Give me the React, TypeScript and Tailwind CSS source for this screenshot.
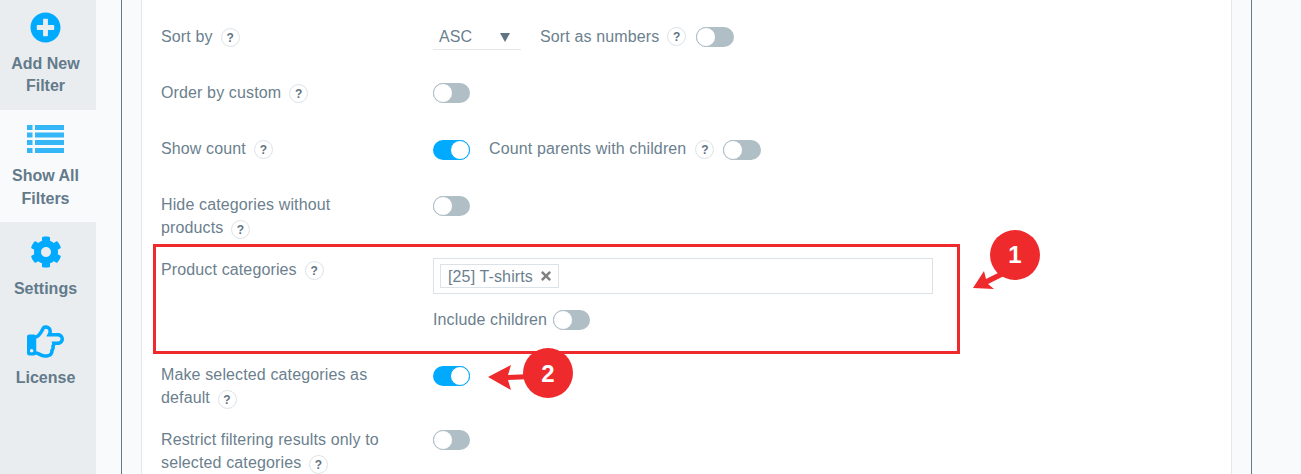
import type { ReactNode } from "react";
import { FaCog, FaPlusCircle, FaRegHandPointRight, FaTimes } from "react-icons/fa";

function Help({ className = "" }: { className?: string }) {
  return (
    <span
      className={`inline-flex h-[19px] w-[19px] shrink-0 items-center justify-center rounded-full border border-[#dbe3e8] bg-white text-[12px] font-bold leading-none text-[#5f7484] ${className}`}
    >
      ?
    </span>
  );
}

function Toggle({ on = false, wide = false, className = "" }: { on?: boolean; wide?: boolean; className?: string }) {
  return (
    <span
      className={`flex h-5 shrink-0 rounded-full ${wide ? "w-[38px]" : "w-[37px]"} ${on ? "justify-end bg-[#00aaff]" : "justify-start bg-[#b0bec5]"} ${className}`}
    >
      <span className={`h-5 w-5 rounded-full border bg-white ${on ? "border-[#00aaff]" : "border-[#b0bec5]"}`} />
    </span>
  );
}

function Row({ label, children }: { label: ReactNode; children?: ReactNode }) {
  return (
    <div className="flex min-h-[37px]">
      <div className="w-[272px] pr-12 text-[#6b7f8e]">{label}</div>
      <div className="flex-1 pt-0.5">{children}</div>
    </div>
  );
}

function ListIcon() {
  return (
    <svg width="37" height="28" viewBox="0 0 37 28" fill="#35b6f6">
      <rect x="0" y="0" width="5.5" height="5" />
      <rect x="8" y="0" width="29" height="5" />
      <rect x="0" y="7.5" width="5.5" height="5" />
      <rect x="8" y="7.5" width="29" height="5" />
      <rect x="0" y="15" width="5.5" height="5" />
      <rect x="8" y="15" width="29" height="5" />
      <rect x="0" y="23" width="5.5" height="5" />
      <rect x="8" y="23" width="29" height="5" />
    </svg>
  );
}

function NavItem({
  icon,
  lines,
  active = false,
  className = "",
  textClassName = "leading-[22.5px]",
}: {
  icon: ReactNode;
  lines: string[];
  active?: boolean;
  className?: string;
  textClassName?: string;
}) {
  return (
    <div className={`flex flex-col items-center pr-[5px] ${active ? "bg-[#f9fafc]" : ""} ${className}`}>
      <div className="flex h-8 items-center justify-center text-[#00aaff]">{icon}</div>
      <div className={`mt-2.5 text-center text-base font-bold text-[#637a8a] ${textClassName}`}>
        {lines.map((l) => (
          <div key={l}>{l}</div>
        ))}
      </div>
    </div>
  );
}

export default function App() {
  return (
    <div className="relative flex h-[474px] w-[1301px] overflow-hidden bg-[#f9fafc] font-['Liberation_Sans',Arial,sans-serif] text-base leading-[23px]">
      <aside className="w-24 shrink-0 bg-[#e9edf0]">
        <NavItem icon={<FaPlusCircle size={31} />} lines={["Add New", "Filter"]} className="h-[110px] pt-[11px]" textClassName="leading-[22px]" />
        <NavItem icon={<ListIcon />} lines={["Show All", "Filters"]} active className="h-[112px] pt-[13px]" />
        <NavItem icon={<FaCog size={32} />} lines={["Settings"]} className="h-[89px] pt-[14px]" />
        <NavItem icon={<FaRegHandPointRight size={37} />} lines={["License"]} className="pt-[14px]" />
      </aside>

      <div className="ml-[25px] h-full w-[1131px] shrink-0 border-x border-x-[#66798a] px-[19px]">
        <div className="h-full border-x border-x-[#e4e8ea] bg-white pl-[19px] pr-[18px] pt-[25px] tracking-[0.13px]">
          <div className="flex flex-col gap-[19px]">
            <Row
              label={
                <span className="flex items-center gap-2">
                  Sort by <Help className="mt-0.5" />
                </span>
              }
            >
              <div className="-mt-0.5 flex items-start">
                <div className="flex h-[25px] w-[88px] items-start justify-between border-b border-[#e4e8ea] pl-1.5 pr-[11px] text-[#6b7f8e]">
                  ASC
                  <span className="mt-2 h-0 w-0 border-x-[5px] border-t-[9px] border-x-transparent border-t-[#5f7484]" />
                </div>
                <span className="ml-[19px] text-[#6b7f8e]">Sort as numbers</span>
                <Help className="ml-2 mt-0.5" />
                <span className="ml-2.5 mt-0.5">
                  <Toggle wide />
                </span>
              </div>
            </Row>
            <Row
              label={
                <span className="flex items-center gap-2">
                  Order by custom <Help className="mt-0.5" />
                </span>
              }
            >
              <Toggle />
            </Row>
            <Row
              label={
                <span className="flex items-center gap-2">
                  Show count <Help className="mt-0.5" />
                </span>
              }
            >
              <div className="flex items-start">
                <Toggle on className="mt-px" />
                <span className="-mt-0.5 ml-[19px] text-[#6b7f8e]">Count parents with children</span>
                <Help className="ml-[9px] mt-px" />
                <span className="ml-[9px] mt-px">
                  <Toggle wide />
                </span>
              </div>
            </Row>
            <Row
              label={
                <>
                  Hide categories without products <Help className="ml-[3px] mt-1 align-top" />
                </>
              }
            >
              <Toggle className="mt-px" />
            </Row>
            <Row
              label={
                <span className="flex items-center gap-2">
                  Product categories <Help className="mt-0.5" />
                </span>
              }
            >
              <div className="-mt-0.5 w-[500px]">
                <div className="flex h-9 items-center border border-[#dbe3e8] pl-1.5">
                  <span className="flex h-6 items-center gap-1.5 border border-[#dbe3e8] pl-[7px] pr-[5px] text-[#6b7f8e]">
                    [25] T-shirts <FaTimes size={14} className="text-[#808080]" />
                  </span>
                </div>
                <div className="mt-[14px] flex items-center gap-1.5 text-[#6b7f8e]">
                  Include children <Toggle />
                </div>
                <div className="h-[13px]" />
              </div>
            </Row>
            <Row
              label={
                <>
                  Make selected categories as default <Help className="ml-[3px] mt-1 align-top" />
                </>
              }
            >
              <Toggle on className="mt-px" />
            </Row>
            <Row
              label={
                <>
                  Restrict filtering results only to selected categories <Help className="ml-[3px] mt-1 align-top" />
                </>
              }
            >
              <Toggle />
            </Row>
          </div>
        </div>
      </div>

      {/* annotations drawn over the page */}
      <div className="absolute left-[153px] top-[244px] h-[110px] w-[807px] border-[3px] border-[#ee2a2c]" />
      <svg className="absolute inset-0" width="1301" height="474" fill="#ee2a2c">
        <path d="M973 288 L984 271 L986 279 L1002 271 L1004 276 L988 284 L994 289 Z" />
        <path d="M488 377 L511 365 L508 375 L532 374 L532 379 L508 380 L511 390 Z" />
      </svg>
      <div className="absolute left-[990px] top-[230px] flex h-[50px] w-[50px] items-center justify-center rounded-full bg-[#ee2a2c] text-2xl font-bold text-white">
        1
      </div>
      <div className="absolute left-[523px] top-[348px] flex h-[50px] w-[50px] items-center justify-center rounded-full bg-[#ee2a2c] pt-0.5 text-2xl font-bold text-white">
        2
      </div>
    </div>
  );
}
